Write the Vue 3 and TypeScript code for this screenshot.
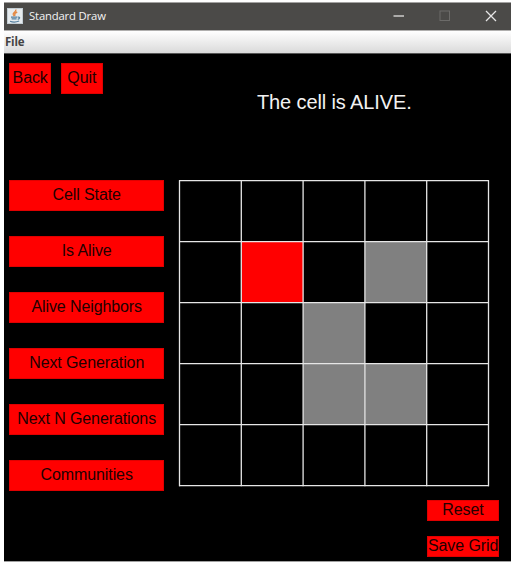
<script setup lang="ts">
interface Cell {
  col: number
  row: number
  state: 'selected' | 'alive'
}

const navigation: string[] = ['Back', 'Quit']
const actions: string[] = ['Cell State', 'Is Alive', 'Alive Neighbors', 'Next Generation', 'Next N Generations', 'Communities']
const cells: Cell[] = [
  { col: 1, row: 1, state: 'selected' },
  { col: 3, row: 1, state: 'alive' },
  { col: 2, row: 2, state: 'alive' },
  { col: 2, row: 3, state: 'alive' },
  { col: 3, row: 3, state: 'alive' },
]
const lines: number[] = [0, 1, 2, 3, 4, 5]
const cellWidth = 61.8
const cellHeight = 61
</script>

<template>
  <div class="window">
    <header class="titlebar">
      <svg class="app-icon" width="16" height="16" viewBox="0 0 16 16">
        <rect x="0.5" y="0.5" width="15" height="15" fill="#e6ebee" stroke="#c3cdd3" />
        <path d="M8.8 1.5C9.6 4 5.5 4.6 6.3 6.6L7.4 8.2M10.2 4C7.4 5.2 7.3 6 8.3 7.6" fill="none" stroke="#e58a45" stroke-width="1.4" />
        <path d="M4 9.1H10.3M4.6 10.8H9.6M3 13.2C5.5 14.2 9.5 14.1 12.2 13M10.8 9.1C13.5 8.7 13 10.9 10.7 11.3" fill="none" stroke="#56809f" stroke-width="1.2" />
      </svg>
      <span class="title">Standard Draw</span>
      <div class="controls">
        <svg width="12" height="12" viewBox="0 0 12 12"><path d="M0.5 6H11" stroke="#ededed" stroke-width="1.2" /></svg>
        <svg width="12" height="12" viewBox="0 0 12 12"><rect x="1" y="1" width="9.5" height="9.5" fill="none" stroke="#6c6b69" /></svg>
        <svg width="12" height="12" viewBox="0 0 12 12"><path d="M1 1L11 11M11 1L1 11" stroke="#e6e6e6" stroke-width="1.3" /></svg>
      </div>
    </header>
    <nav class="menubar"><span>File</span></nav>
    <main class="canvas">
      <div class="top">
        <div class="navigation">
          <button v-for="name in navigation" :key="name" class="btn small">{{ name }}</button>
        </div>
        <p class="message">The cell is ALIVE.</p>
      </div>
      <div class="middle">
        <div class="actions">
          <button v-for="name in actions" :key="name" class="btn">{{ name }}</button>
        </div>
        <svg class="grid" width="312" height="308" viewBox="-1.5 -1.7 312 308">
          <rect
            v-for="cell in cells"
            :key="`${cell.col}-${cell.row}`"
            :class="cell.state"
            :x="cell.col * cellWidth"
            :y="cell.row * cellHeight"
            :width="cellWidth"
            :height="cellHeight"
          />
          <g class="lines">
            <line v-for="n in lines" :key="`v${n}`" :x1="n * cellWidth" :x2="n * cellWidth" y1="-0.5" y2="305.5" />
            <line v-for="n in lines" :key="`h${n}`" :y1="n * cellHeight" :y2="n * cellHeight" x1="-0.5" x2="309.5" />
          </g>
        </svg>
      </div>
      <div class="bottom">
        <button class="btn compact">Reset</button>
        <button class="btn compact">Save Grid</button>
      </div>
    </main>
  </div>
</template>

<style>
body {
  background: #fff;
}
</style>

<style scoped>
.window {
  box-sizing: border-box;
  width: 507px;
  height: 562px;
  margin: 0 0 0 4px;
  padding-top: 2px;
  display: flow-root;
  font-family: "Liberation Sans", Arial, sans-serif;
}
.titlebar {
  box-sizing: border-box;
  height: 29px;
  display: flex;
  align-items: center;
  padding: 0 14px 1px 3px;
  border-top: 1px solid #a3a2a1;
  border-bottom: 1px solid #b0afae;
  background: #4b4a48;
}
.app-icon {
  margin-top: -1px;
}
.title {
  margin-left: 6px;
  color: #f4f4f4;
  font: 11.3px/16px "Open Sans", "Noto Sans", sans-serif;
  letter-spacing: -0.17px;
}
.controls {
  margin-left: auto;
  display: flex;
  gap: 34px;
}
.menubar {
  box-sizing: border-box;
  height: 23px;
  padding-left: 1px;
  background: linear-gradient(#fff, #dadada);
  border-bottom: 1px solid #555;
  color: #444;
  font: bold 11.5px/22px "Open Sans", "Noto Sans", sans-serif;
  letter-spacing: -0.2px;
}
.canvas {
  box-sizing: border-box;
  height: 508px;
  padding: 9px 12px 0 5.4px;
  background: #000;
  border-bottom: 1px solid #a0a0a0;
}
.top {
  display: flex;
  height: 116px;
}
.navigation {
  display: flex;
  gap: 10px;
  width: 247.6px;
}
.message {
  margin: 28px 0 0;
  color: #f2f2f2;
  font-size: 20px;
  line-height: 23px;
  letter-spacing: -0.12px;
  white-space: nowrap;
}
.btn {
  box-sizing: border-box;
  width: 154.6px;
  height: 31px;
  padding: 0 0 2px;
  border: 1px solid #df0000;
  border-radius: 0;
  background: #f00;
  color: #210000;
  font: 16px/18px "Liberation Sans", Arial, sans-serif;
  letter-spacing: -0.1px;
  white-space: nowrap;
}
.small {
  width: 41.6px;
}
.middle {
  display: flex;
  gap: 14px;
  height: 320px;
}
.actions {
  display: flex;
  flex-direction: column;
  gap: 25px;
  padding-top: 1px;
}
.bottom {
  display: flex;
  flex-direction: column;
  align-items: flex-end;
  gap: 15px;
  padding-top: 1px;
}
.compact {
  width: 72px;
  height: 21px;
}
.selected {
  fill: #f00;
}
.alive {
  fill: #808080;
}
.lines {
  stroke: #e6e6e6;
  stroke-width: 1.3;
}
</style>
